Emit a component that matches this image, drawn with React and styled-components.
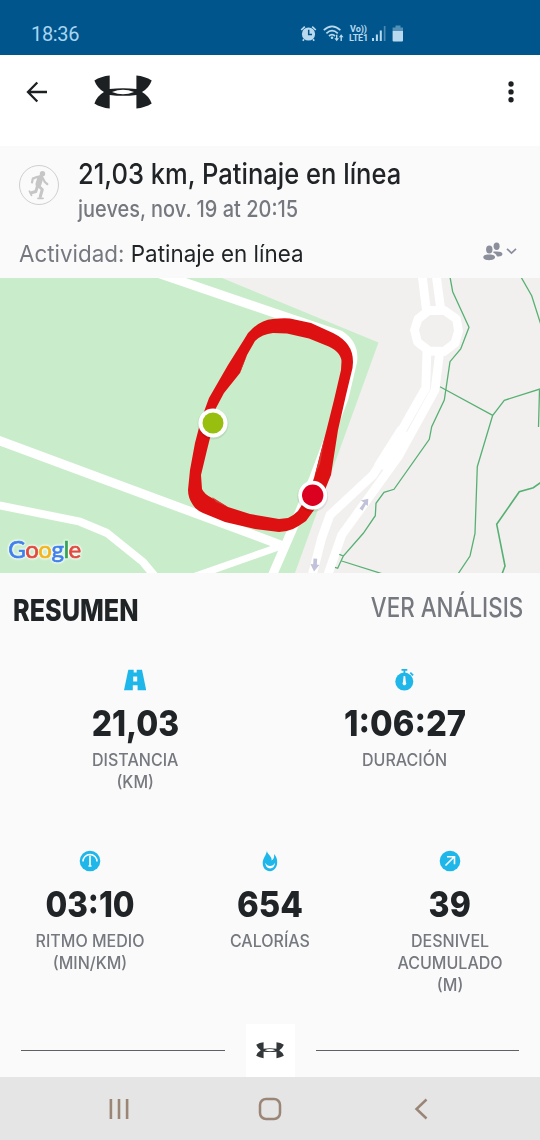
import React from "react";
import styled, { createGlobalStyle } from "styled-components";

const Global = createGlobalStyle`
  *, *::before, *::after { box-sizing: border-box; }
  body { margin: 0; background: #fafafa; font-family: Inter, "Noto Sans", sans-serif; }
  svg { display: block; flex: none; }
`;

const ink = "#202427";
const muted = "#75787e";
const cyan = "#1fb6ea";

const Screen = styled.div`
  display: flex;
  flex-direction: column;
  width: 540px;
  height: 1140px;
  background: #fafafa;
  color: ${ink};
  overflow: hidden;
`;

const StatusBar = styled.header`
  display: flex;
  align-items: center;
  height: 55px;
  padding: 12px 136px 0 31px;
  background: #00568c;
  color: #a9d4f2;
`;

const Clock = styled.time`
  flex: 1;
  font: 400 20px/24px Roboto, sans-serif;
  letter-spacing: -0.35px;
`;

const StatusIcons = styled.div`
  display: flex;
  align-items: center;
  color: #b9d9ee;
`;

const Volte = styled.span`
  display: flex;
  flex-direction: column;
  align-items: center;
  width: 21px;
  margin: 0 3px 0 4px;
  font: 700 9px/8.5px Roboto, sans-serif;
`;

const VolteLine = styled.span`
  white-space: nowrap;
  letter-spacing: ${(p) => p.$spacing}px;
`;

const AppBar = styled.nav`
  display: flex;
  align-items: center;
  height: 91px;
  padding: 0 23px 18px 26px;
  background: #fff;
`;

const BrandSlot = styled.div`
  flex: 1;
  padding-left: 46px;
`;

const Summary = styled.section`
  height: 132px;
  padding: 10px 20px 0 19px;
`;

const WorkoutHead = styled.div`
  display: flex;
  gap: 19px;
`;

const Badge = styled.div`
  display: flex;
  align-items: center;
  justify-content: center;
  width: 40px;
  height: 40px;
  margin-top: 9px;
  border: 1.5px solid #cfcfcf;
  border-radius: 50%;
`;

const Condensed = styled.span`
  display: block;
  white-space: nowrap;
  transform: scaleX(${(p) => p.$x});
  transform-origin: ${(p) => p.$origin || "left"} center;
`;

const Title = styled.h1`
  margin: 0;
  padding-top: 1px;
  font-size: 29px;
  font-weight: 500;
  line-height: 34px;
`;

const When = styled.p`
  margin: 4px 0 0;
  color: ${muted};
  font-size: 22.5px;
  font-weight: 500;
  line-height: 28px;
`;

const ActivityRow = styled.div`
  display: flex;
  justify-content: space-between;
  margin-top: 16px;
  font-size: 23.5px;
  line-height: 30px;
`;

const Hint = styled.span`
  color: ${muted};
`;

const Privacy = styled.div`
  display: flex;
  align-items: center;
  gap: 3px;
  height: 24px;
  margin-right: 3px;
  color: #8b8e9b;
`;

const MapFrame = styled.section`
  height: 295px;
`;

const SectionHead = styled.div`
  display: flex;
  justify-content: space-between;
  height: 96px;
  padding: 16px 17px 0 13px;
`;

const Heading = styled.h2`
  margin: 3px 0 0;
  font-size: 29.5px;
  font-weight: 800;
  line-height: 36px;
`;

const AnalysisLink = styled.a`
  color: ${muted};
  font-size: 26.5px;
  font-weight: 500;
  line-height: 36px;
`;

const MetricRow = styled.div`
  display: grid;
  grid-template-columns: repeat(${(p) => p.$columns}, 1fr);
  height: ${(p) => p.$height}px;
  justify-items: center;
  align-items: start;
`;

const MetricBox = styled.div`
  display: flex;
  flex-direction: column;
  align-items: center;
`;

const Value = styled.strong`
  margin-top: 12px;
  font-size: 36px;
  font-weight: 800;
  line-height: 40px;
`;

const Label = styled.div`
  margin-top: 7px;
  color: ${muted};
  font-size: 16.8px;
  font-weight: 500;
  line-height: 21.8px;
  text-align: center;
`;

const Divider = styled.div`
  display: flex;
  align-items: center;
  height: 53px;
  padding: 0 21px;
`;

const Rule = styled.span`
  flex: 1;
  height: 1.4px;
  background: #5d6065;
`;

const LogoTile = styled.div`
  display: flex;
  align-items: center;
  justify-content: center;
  width: 49px;
  height: 53px;
  margin: 0 21px;
  background: #fff;
`;

const NavBar = styled.footer`
  display: grid;
  grid-template-columns: 90px 1fr 90px;
  align-items: center;
  justify-items: center;
  height: 63px;
  padding: 0 74px;
  background: #e5e5e5;
`;

function Logo({ width, color = "#1d2022" }) {
  return (
    <svg width={width} height={(width * 34) / 58} viewBox="0 0 58 34" fill={color}>
      <path
        fillRule="evenodd"
        d="M.4 5.5Q7 1.3 15.7.5V14Q29 12.3 42.4 14V.5Q51 1.3 57.7 5.5Q55 13 48 17Q55 21 57.7 28.5Q51 32.7 42.4 33.5V20Q29 21.7 15.7 20V33.5Q7 32.7.4 28.5Q3 21 10 17Q3 13 .4 5.5ZM18 17Q29 12.4 40 17Q29 21.6 18 17Z"
      />
    </svg>
  );
}

function AlarmIcon() {
  return (
    <svg width="17" height="17" viewBox="0 0 17 17">
      <circle cx="8.5" cy="9" r="6.6" fill="currentColor" />
      <path d="M1.2 5 4.8 1.6M15.8 5 12.2 1.6M4 14.2l-1.2 1.6M13 14.2l1.2 1.6" stroke="currentColor" strokeWidth="1.7" />
      <path d="M8.7 4.8V9.6H12" fill="none" stroke="#00568c" strokeWidth="1.5" />
    </svg>
  );
}

function WifiIcon() {
  return (
    <svg width="21" height="17" viewBox="0 0 21 17" fill="none" stroke="currentColor" strokeWidth="1.7">
      <path d="M.8 5.2Q9 -2.4 17.4 5.2M3.4 8.3Q9 3 14.8 8.3M6 11Q9 8.4 12 11" />
      <circle cx="9" cy="12.8" r="1.3" fill="currentColor" stroke="none" />
      <path d="M13.7 9.8V15M18.2 16v-5" strokeWidth="1.4" />
      <path d="M11.4 13.2h4.6l-2.3 3zM15.9 12.2h4.6l-2.3-3z" fill="currentColor" stroke="none" />
    </svg>
  );
}

function SignalIcon() {
  return (
    <svg width="14" height="17" viewBox="0 0 14 17" fill="currentColor">
      <path d="M0 13h2v3H0zM3.9 9.5h2V16h-2zM7.8 5.5h2V16h-2z" />
      <path d="M11.8 1h1.7v15h-1.7z" opacity=".4" />
    </svg>
  );
}

function BatteryIcon() {
  return (
    <svg width="12" height="17" viewBox="0 0 12 17" fill="currentColor">
      <path d="M3.5.5h5v2H11V6H.6V2.5h2.900z" opacity=".45" />
      <path d="M.6 6H11v9.500a1 1 0 0 1-1 1H1.600a1 1 0 0 1-1-1z" />
    </svg>
  );
}

const StatusGap = styled.span`
  width: ${(p) => p.$w}px;
`;

function BackArrow() {
  return (
    <svg width="22" height="22" viewBox="0 0 22 22" fill="none" stroke="#1d2022" strokeWidth="2.3">
      <path d="M21 11H2.200M11.300 1.500 2 11l9.300 9.500" />
    </svg>
  );
}

function MoreDots() {
  return (
    <svg width="12" height="22" viewBox="0 0 12 22" fill="#1d2022">
      <circle cx="6" cy="3" r="2.700" />
      <circle cx="6" cy="10.900" r="2.700" />
      <circle cx="6" cy="18.800" r="2.700" />
    </svg>
  );
}

function SkaterIcon() {
  return (
    <svg width="22" height="32" viewBox="0 0 22 32" fill="none" stroke="#c6c6c6" strokeLinecap="round" strokeLinejoin="round">
      <circle cx="14.500" cy="4.800" r="2.700" fill="#c6c6c6" stroke="none" />
      <path d="M12.300 9 10.500 15" strokeWidth="6" />
      <path d="M9.500 7.800 4.800 9.600 4 13.500M15 9.500 16.800 13l2.500 2.200" strokeWidth="2.200" />
      <path d="M10.500 17 14.300 20.500 12.300 27.500M9.500 17 7.800 22.500 3.500 23.800" strokeWidth="3" />
      <path d="M10 29.300h5M1.500 22.300l2 4" strokeWidth="1.800" />
    </svg>
  );
}

function FriendsIcon() {
  return (
    <svg width="20" height="19" viewBox="0 0 20 19" fill="currentColor">
      <ellipse cx="6.300" cy="7.400" rx="3.200" ry="4" />
      <ellipse cx="13.600" cy="4.200" rx="3" ry="3.700" />
      <path d="M.3 15.300C.5 12.800 3.500 12.600 6 12.600s5.800.2 6 2.700c0 2-3 2.900-6 2.900S.3 17.200.3 15.300Z" />
      <path d="M10.300 9.800c1.300-.6 2.500-.4 3.600-.3 3 .1 5.400.6 5.500 2.300.1 2.400-3 3.100-5.500 2.500-.6-1.800-1.700-2.800-3.600-3.500z" />
    </svg>
  );
}

function ChevronDown() {
  return (
    <svg width="11" height="8" viewBox="0 0 11 8" fill="none" stroke="currentColor" strokeWidth="1.700">
      <path d="M1 1.800 5.500 6 10 1.800" />
    </svg>
  );
}

const icons = {
  road: (
    <>
      <path d="M4.300.8H18L22.200 21.200H0z" fill={cyan} />
      <path d="M9.700 0h3v3.500h-3zM9.200 7.400h4v5h-4zM8.800 16.300h4.800v6H8.800z" fill="#fafafa" />
    </>
  ),
  stopwatch: (
    <>
      <circle cx="10.300" cy="12.600" r="9" fill={cyan} />
      <path d="M7.500.9h5.800M10.400 1v4M16.300 3.600l2.800 2.700" stroke={cyan} strokeWidth="1.800" />
      <path d="M9.600 7h1.600l.7 6.200a1.900 1.900 0 1 1-3 0z" fill="#fafafa" />
    </>
  ),
  gauge: (
    <>
      <circle cx="11" cy="11" r="10.300" fill={cyan} />
      <path d="M4 11.500A7 7 0 0 1 18 11.500" fill="none" stroke="#fff" strokeWidth="1.500" />
      <path d="M11 5.500v10M9.500 16h3" stroke="#fff" strokeWidth="1.600" />
    </>
  ),
  flame: (
    <>
      <path d="M8 .6C7.600 4 13.500 6.500 12.600 10.500c1.900-.9 2.900-3 2.500-6.500 2.200 2.600 3.300 5.300 3.100 8.800-.3 5-3.300 8.400-7.200 8.400-4.300 0-7.300-3.400-7.300-8.200C3.700 8.500 7.300 5.500 8 .6Z" fill={cyan} />
      <path d="M6.300 12.800c1.200 2.300 2.800 3.100 4.800 3.100 2.100 0 3.700-.9 4.900-3.100-.2 3.500-2 5.700-4.900 5.700-2.800 0-4.600-2.200-4.800-5.700Z" fill="#fff" />
    </>
  ),
  climb: (
    <>
      <circle cx="11" cy="11" r="10.300" fill={cyan} />
      <path d="M6.500 15.500 15.300 6.800M8 6.700h7.500V14.300" fill="none" stroke="#fff" strokeWidth="1.600" />
    </>
  ),
};

function Metric({ icon, value, scale, lines }) {
  return (
    <MetricBox>
      <svg width="22" height="22" viewBox="0 0 22 22">{icons[icon]}</svg>
      <Value>
        <Condensed $x={scale} $origin="center">{value}</Condensed>
      </Value>
      <Label>
        {lines.map((line) => (
          <Condensed key={line} $x={0.955} $origin="center">{line}</Condensed>
        ))}
      </Label>
    </MetricBox>
  );
}

const GoogleMark = styled.text`
  font: 400 24px Lato, sans-serif;
  stroke-width: 0.7px;
  filter: drop-shadow(0 0 1px #fff) drop-shadow(0 0 1px #fff);
`;

const Letter = styled.tspan`
  fill: ${(p) => p.$color};
  stroke: ${(p) => p.$color};
`;

function RouteMap() {
  return (
    <svg width="540" height="295" viewBox="0 278 540 295" fill="none">
      <path d="M0 270H540V580H0z" fill="#f1f0ef" />
      <path d="M0 270H200L222 278 378.500 342.500 295 573V580H0z" fill="#c9edcb" />

      <g stroke="#fff" strokeWidth="9" strokeLinejoin="round">
        <path d="M150 270.500 270 311.500 340 335Q355 345 352.500 362L344 398 313 480 292 530 269 583" />
        <path d="M-5 439 270 541 283 546" />
        <path d="M-5 504.500 80 521.700 107 533 143 562 158 580" strokeWidth="8" />
        <path d="M190 578 267 551 284 545" strokeWidth="7" />
      </g>

      <g stroke="#fff" strokeWidth="8.800" strokeLinejoin="round">
        <path d="M421.500 270 427 315M435.500 270 441.500 315M427 350 425.700 388 403 428 373 475 330 515 321.700 538 311 580" />
        <path d="M440 350 435 390 413 430 398 457 380 482 341.700 535 326 580" />
        <path d="M404 430 380 468" strokeWidth="14" />
        <path d="M428.500 310.500 444.500 310.500 456.500 319 458.500 331 455 343 444 351.500 429 351 417.500 342 414.500 330 418 319z" fill="#f1f0ef" />
      </g>

      <g stroke="#57b073" strokeWidth="1.300">
        <path d="M450 277 452.700 291.700 469 327.300 460.700 349 450 361.700 444.300 400 431.700 426.700 429.300 439.300 394 489.300 384 492.300 376 503.300 375.300 515.700 363.300 533.300 343.300 556 337.700 568.300 335 567.300M339.300 554.300 343.300 556M341.700 561 383 574" />
        <path d="M440 386.700 492.700 415.300 504.300 400.300 541 388.700M492.700 415.300 477.300 466.700 475 533.300 470 556 458 574" />
        <path d="M521 277 531.700 295.700 541 325M539.500 390 538.500 427" />
        <path d="M541 482.300 533.300 487.700 519.300 491.700 496.700 524.300 505 566 502 574" strokeWidth="1.600" />
      </g>

      <g fill="#c1c1d9">
        <path d="M359.500 508.500 364 502.500 360.800 500.500 368.300 498.800 367.800 506 365.800 504.500 362.500 510.800z" />
        <path d="M313.500 558.500 317.200 558.700 316.800 564.500 319.300 565 314 571.500 310.500 564 313.200 564.300z" />
      </g>

      <path
        fill="#dd1111"
        fillRule="evenodd"
        d="M273 319Q282 318 290 318.500L311 323 333 333Q343 338 348 345 353 352 353 362L352.500 368 346 395 338 430 331 475 322 497 314 510 306 521Q299 526 293 529 286 532 279 532L255 529 225 522 203 513Q196 510 193 505 188 498 188 490L190 470 195 443 201 420 209 398 228 365 245 338Q248 332 253 328 262 320 273 319ZM273 333 287 333.500 309 338.500 325 345Q333 348 337 352 341 356 341.500 361L341 370 334 400 327 428 314 478 307 497 298 511Q293 516 288 518L279 519 250 514 228 507 212 498Q204 494 202 489L201 475 207 450 212 430 216 408 224 393 240 373 247 355 255 341Q262 334 273 333Z"
      />
      <path d="M240 373 247 355 242 366M212 497 228 507 216 502M325 436 315 475 320 464" fill="#d93a32" />

      <circle cx="213" cy="424" r="15.500" fill="#000" opacity=".08" />
      <circle cx="213" cy="423" r="14.600" fill="#fff" />
      <circle cx="213" cy="423" r="10.500" fill="#98bf10" />
      <circle cx="312.700" cy="496.500" r="15.500" fill="#000" opacity=".08" />
      <circle cx="312.700" cy="495.300" r="14.500" fill="#fff" />
      <circle cx="312.700" cy="495.300" r="10.700" fill="#dc0020" />

      <GoogleMark x="8.300" y="557.800" textLength="73">
        <Letter $color="#4080ec">G</Letter>
        <Letter $color="#e04a3f">o</Letter>
        <Letter $color="#f2b51d">o</Letter>
        <Letter $color="#4080ec">g</Letter>
        <Letter $color="#35a355">l</Letter>
        <Letter $color="#e04a3f">e</Letter>
      </GoogleMark>
    </svg>
  );
}

export default function App() {
  return (
    <Screen>
      <Global />
      <StatusBar>
        <Clock>18:36</Clock>
        <StatusIcons>
          <AlarmIcon />
          <StatusGap $w={6} />
          <WifiIcon />
          <Volte>
            <VolteLine $spacing={0}>Vo))</VolteLine>
            <VolteLine $spacing={-0.2}>LTE1</VolteLine>
          </Volte>
          <SignalIcon />
          <StatusGap $w={6} />
          <BatteryIcon />
        </StatusIcons>
      </StatusBar>

      <AppBar>
        <BackArrow />
        <BrandSlot>
          <Logo width={58} />
        </BrandSlot>
        <MoreDots />
      </AppBar>

      <Summary>
        <WorkoutHead>
          <Badge>
            <SkaterIcon />
          </Badge>
          <div>
            <Title>
              <Condensed $x={0.881}>21,03 km, Patinaje en línea</Condensed>
            </Title>
            <When>
              <Condensed $x={0.887}>jueves, nov. 19 at 20:15</Condensed>
            </When>
          </div>
        </WorkoutHead>
        <ActivityRow>
          <Condensed $x={0.953}>
            <Hint>Actividad:</Hint> Patinaje en línea
          </Condensed>
          <Privacy>
            <FriendsIcon />
            <ChevronDown />
          </Privacy>
        </ActivityRow>
      </Summary>

      <MapFrame>
        <RouteMap />
      </MapFrame>

      <SectionHead>
        <Heading>
          <Condensed $x={0.855}>RESUMEN</Condensed>
        </Heading>
        <AnalysisLink>
          <Condensed $x={0.846} $origin="right">VER ANÁLISIS</Condensed>
        </AnalysisLink>
      </SectionHead>

      <MetricRow $columns={2} $height={181}>
        <Metric icon="road" value="21,03" scale={0.885} lines={["DISTANCIA", "(KM)"]} />
        <Metric icon="stopwatch" value="1:06:27" scale={0.91} lines={["DURACIÓN"]} />
      </MetricRow>
      <MetricRow $columns={3} $height={174}>
        <Metric icon="gauge" value="03:10" scale={0.875} lines={["RITMO MEDIO", "(MIN/KM)"]} />
        <Metric icon="flame" value="654" scale={0.915} lines={["CALORÍAS"]} />
        <Metric icon="climb" value="39" scale={0.89} lines={["DESNIVEL", "ACUMULADO", "(M)"]} />
      </MetricRow>

      <Divider>
        <Rule />
        <LogoTile>
          <Logo width={28} color="#33373a" />
        </LogoTile>
        <Rule />
      </Divider>

      <NavBar>
        <svg width="20" height="22" viewBox="0 0 20 22" stroke="#9b8576" strokeWidth="2.600">
          <path d="M1.900 1V21M10 1V21M18.100 1V21" />
        </svg>
        <svg width="24" height="24" viewBox="0 0 24 24" fill="none" stroke="#9b8576" strokeWidth="2.500">
          <rect x="2" y="2" width="20" height="20" rx="6" />
        </svg>
        <svg width="14" height="22" viewBox="0 0 14 22" fill="none" stroke="#9b8576" strokeWidth="2.500">
          <path d="M12.500 1.500 2.500 11l10 9.500" />
        </svg>
      </NavBar>
    </Screen>
  );
}
